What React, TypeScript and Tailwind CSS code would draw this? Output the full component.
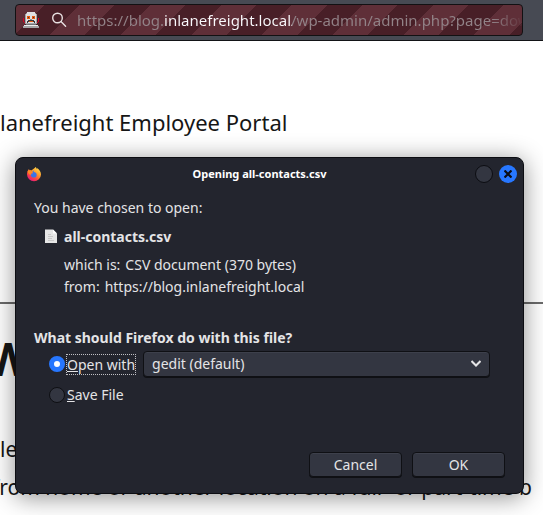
import { useState } from "react";

function RobotIcon() {
  return (
    <svg viewBox="0 0 16 16" className="h-4 w-4 shrink-0" shapeRendering="crispEdges" aria-hidden="true">
      <path d="M0 6h1v4h2v1H1v-1H0zM15 6h1v4h-1v1h-2v-1h2z" fill="#d70022" />
      <path d="M3 1h10v1h1v10H2V2h1z" fill="#a4a4a6" />
      <path d="M4 0h8v2h1v9H3V2h1z" fill="#e0e0e2" />
      <path d="M4 4h3v3H4zM9 4h3v3H9z" fill="#e8590c" />
      <path d="M5 5h1v1H5zM10 5h1v1h-1z" fill="#38383d" />
      <path d="M7 7h2v1H7z" fill="#8a8a8d" />
      <path d="M4 9h1V8h6v1h1v2h-1v-1H5v1H4z" fill="#38383d" />
      <path d="M6 9h4v1H6z" fill="#e8590c" />
      <path d="M1 13h14v1h1v2H0v-2h1z" fill="#a4a4a6" />
      <path d="M1 13h14v1H1z" fill="#ededf0" />
      <path d="M3 12h10v1H3z" fill="#737376" />
    </svg>
  );
}

function SearchIcon() {
  return (
    <svg viewBox="0 0 16 16" className="h-4 w-4 shrink-0" fill="none" stroke="#e9e1e2" strokeWidth="1.4" strokeLinecap="round" aria-hidden="true">
      <circle cx="6.5" cy="6" r="4.8" />
      <path d="M10 9.6l4.600 4.600" />
    </svg>
  );
}

function FirefoxIcon() {
  return (
    <svg viewBox="0 0 16 16" className="h-4 w-4" aria-hidden="true">
      <defs>
        <linearGradient id="fox" x1="0.85" y1="0.05" x2="0.25" y2="0.95">
          <stop offset="0" stopColor="#ffe14a" />
          <stop offset="0.4" stopColor="#ff9a2e" />
          <stop offset="0.7" stopColor="#ff4a3c" />
          <stop offset="1" stopColor="#e5197e" />
        </linearGradient>
      </defs>
      <path d="M9.7 1c.7 1 1.1 1.8 1.3 2.3.2-.4.3-.8.2-1.2 1.9 1.3 3.8 3.7 3.8 6.4A7 7 0 0 1 8 15.2 7 7 0 0 1 1 8.300c0-2.200.9-4 2-5.300.1.7.3 1.100.6 1.500.8-.3 1.500-.3 2.200-.1.400-.9 2-1.700 2.300-1.900.2 0 .8-1 1.600-1.500z" fill="url(#fox)" />
      <path d="M5.200 5.600c1-.9 2-1 3-.8l-.7 1 2.300.9c1 1.100 1.200 2.500.5 3.700-1 1.500-3.400 1.600-4.700.3-.8-.8-1.200-2-.8-3 .7.2 1.400.1 1.800-.4.3-.4.100-.9-1.400-1.700z" fill="#3b74e8" />
      <path d="M1.600 5.300c1.300-1.300 3-1.500 4.200-.5l1.500.9c-.2.800-1.300 1.100-2 1.300-.8.400-.6 1.500.3 2.100-2-.1-3.700-1.700-4-3.800z" fill="#ff8a22" />
    </svg>
  );
}

function FileIcon() {
  return (
    <svg viewBox="0 0 12 14" className="mr-[7px] mb-[3px] h-3.5 w-3 shrink-0" aria-hidden="true">
      <path d="M0 .5h8l4 4V14H0z" fill="#e6e6e6" />
      <path d="M8 .5v4h4z" fill="#ffffff" />
      <path d="M3 5.500h3M3 7.500h5M3 9.500h4M3 11.500h6" stroke="#c8c8c8" />
    </svg>
  );
}

function AddressBar() {
  return (
    <header className="border-b border-[#121316] bg-[#474a53] pt-1 pr-5 pb-1 pl-[15px]">
      <div className="flex h-8 items-center rounded-[4px] border border-[#121113] bg-[repeating-linear-gradient(135deg,#5f2f38_0px,#5f2f38_20px,#481f27_20px,#481f27_45px,#5f2f38_45px,#5f2f38_50px)] pl-[7px]">
        <RobotIcon />
        <span className="w-3" />
        <SearchIcon />
        <input
          aria-label="Address"
          type="text"
          defaultValue="https://blog.inlanefreight.local/wp-admin/admin.php?page=download_report"
          className="ml-2.5 min-w-0 flex-1 bg-[linear-gradient(to_right,#928388_87px,#fbfbfe_87px,#fbfbfe_215px,#928388_215px,#928388_415px,transparent_447px)] bg-clip-text text-[15px] leading-6 text-transparent outline-none"
        />
      </div>
    </header>
  );
}

function Dialog() {
  const [choice, setChoice] = useState("open");
  const radio =
    "h-4 w-4 shrink-0 appearance-none rounded-full border border-[#0e0f13] bg-[#333641] checked:border-5 checked:border-[#2777ff] checked:bg-white";
  const button =
    "h-[25px] w-[93px] rounded-[4px] border border-[#0f1014] bg-[#333641] text-[14px] leading-5 shadow-[inset_0_1px_#3d404b,0_1px_#0f1014]";

  return (
    <section
      role="dialog"
      aria-labelledby="dialog-title"
      className="absolute top-[157px] right-[19px] left-[15px] rounded-[8px] border border-[#0c0d12] bg-[#23252e] text-[14px] leading-[22px] text-[#e4e4e6] shadow-[0_3px_24px_rgba(0,0,0,0.45)]"
    >
      <div className="grid h-[31px] grid-cols-[40px_1fr_60px] items-center">
        <div className="pl-2.5">
          <FirefoxIcon />
        </div>
        <h2 id="dialog-title" className="text-center text-[11px] font-bold text-white">
          Opening all-contacts.csv
        </h2>
        <div className="flex justify-end gap-1.5 pr-1.5">
          <button aria-label="Minimize" className="h-[18px] w-[18px] rounded-full border border-[#0c0d12] bg-[#333641]" />
          <button aria-label="Close" className="flex h-[18px] w-[18px] items-center justify-center rounded-full bg-[#2777ff]">
            <svg viewBox="0 0 8 8" className="h-2 w-2" stroke="#0b0d14" strokeWidth="2.200" aria-hidden="true">
              <path d="M.5.5l7 7M7.500.5l-7 7" />
            </svg>
          </button>
        </div>
      </div>

      <div className="pt-2 pr-[18px] pb-4 pl-[18px]">
        <p>You have chosen to open:</p>
        <div className="mt-[7px] flex items-center pl-[11px]">
          <FileIcon />
          <strong>all-contacts.csv</strong>
        </div>
        <dl className="mt-1.5 pl-[30px]">
          <div className="flex gap-[5px]">
            <dt>which is:</dt>
            <dd>CSV document (370 bytes)</dd>
          </div>
          <div className="flex gap-[5px]">
            <dt>from:</dt>
            <dd>https://blog.inlanefreight.local</dd>
          </div>
        </dl>

        <fieldset className="mt-[29px]">
          <legend className="font-bold">What should Firefox do with this file?</legend>
          <div className="mt-0.5 flex items-center pr-[15px] pl-[15px]">
            <input id="open" type="radio" name="action" className={radio} checked={choice === "open"} onChange={() => setChoice("open")} />
            <label htmlFor="open" className="ml-px border border-dotted border-[#c0c0c4] leading-[19px]">
              <u>O</u>pen with
            </label>
            <div className="relative ml-[7px] flex-1">
              <select
                aria-label="Application"
                className="h-[26px] w-full appearance-none rounded-[4px] border border-[#0f1014] bg-[#333641] px-2 text-[14px] shadow-[inset_0_1px_#3d404b,0_1px_#0f1014]"
              >
                <option>gedit (default)</option>
              </select>
              <svg viewBox="0 0 10 7" className="pointer-events-none absolute top-[9px] right-[9px] h-[7px] w-2.5" fill="none" stroke="#e4e4e6" strokeWidth="2" aria-hidden="true">
                <path d="M.5 1L5 5.500 9.500 1" />
              </svg>
            </div>
          </div>
          <div className="mt-[7px] flex items-center pl-[15px]">
            <input id="save" type="radio" name="action" className={radio} checked={choice === "save"} onChange={() => setChoice("save")} />
            <label htmlFor="save" className="ml-0.5">
              <u>S</u>ave File
            </label>
          </div>
        </fieldset>

        <div className="mt-[46px] flex justify-end gap-2.5">
          <button className={button}>Cancel</button>
          <button className={button}>OK</button>
        </div>
      </div>
    </section>
  );
}

export default function App() {
  return (
    <div className="relative h-screen overflow-hidden bg-white font-['Noto_Sans',sans-serif] text-[#161616]">
      <AddressBar />
      <main className="whitespace-nowrap">
        <p className="pt-[63px] text-[22px] leading-9">lanefreight Employee Portal</p>
        <hr className="mt-[162px] border-t-2 border-[#6b6b6b]" />
        <h1 className="-ml-3.5 pt-[18px] text-[46px] leading-[72px] font-bold">W</h1>
        <p className="pt-9 text-[21px] leading-[38px]">
          le
          <br />
          <span className="-ml-2">from home or another location on a full- or part-time b</span>
        </p>
      </main>
      <Dialog />
    </div>
  );
}
